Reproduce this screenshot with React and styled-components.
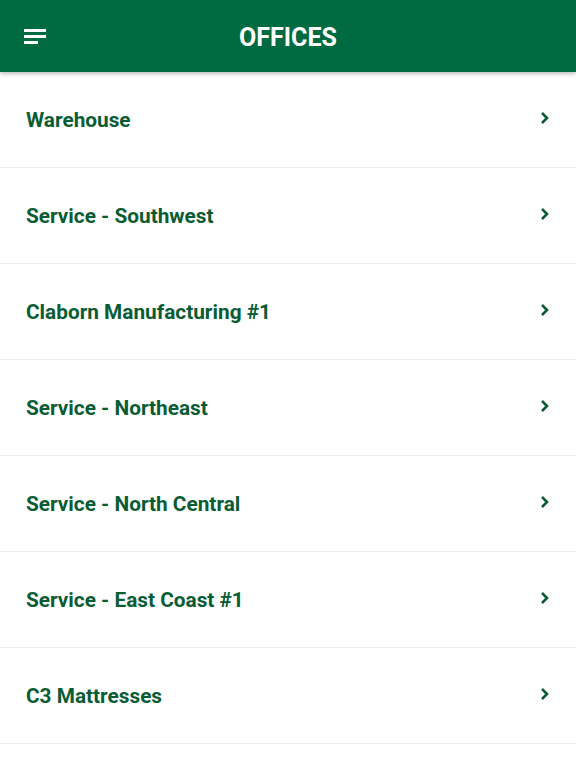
import React from "react";
import styled, { createGlobalStyle } from "styled-components";

const offices = [
  "Warehouse",
  "Service - Southwest",
  "Claborn Manufacturing #1",
  "Service - Northeast",
  "Service - North Central",
  "Service - East Coast #1",
  "C3 Mattresses",
];

const GlobalStyle = createGlobalStyle`
  body {
    margin: 0;
    background: #ffffff;
    font-family: Roboto, "Liberation Sans", sans-serif;
  }
`;

const Page = styled.div`
  width: 576px;
  min-height: 768px;
  background: #fff;
`;

const Header = styled.header`
  position: relative;
  z-index: 1;
  height: 72px;
  display: flex;
  align-items: center;
  justify-content: center;
  background: #006a40;
  box-shadow: 0 2px 4px rgba(0, 0, 0, 0.25);
`;

const MenuButton = styled.button`
  position: absolute;
  left: 24px;
  top: 29px;
  width: 24px;
  height: 16px;
  padding: 0;
  border: none;
  background: none;
  display: flex;
  flex-direction: column;
  gap: 3.5px;
  span {
    display: block;
    height: 2.5px;
    background: #fff;
    width: 22px;
  }
  span:last-child {
    width: 14px;
  }
`;

const Title = styled.h1`
  margin: 2px 0 0;
  color: #fff;
  font-size: 25px;
  font-weight: 700;
`;

const List = styled.ul`
  margin: 0;
  padding: 0;
  list-style: none;
`;

const Row = styled.li`
  height: 95px;
  border-bottom: 1px solid #ececec;
  display: flex;
  align-items: center;
  justify-content: space-between;
  padding: 0 24px 0 26px;
`;

const Name = styled.span`
  color: #0a5c34;
  font-size: 20.8px;
  font-weight: 700;
  margin-top: 0;
`;

const Chevron = () => (
  <svg width="14" height="14" viewBox="0 0 14 14" style={{ marginTop: -3 }}>
    <path d="M4 2l5 5-5 5" fill="none" stroke="#0a5c34" strokeWidth="2.6" />
  </svg>
);

const App = () => {
  return (
    <Page>
      <GlobalStyle />
      <Header>
        <MenuButton>
          <span />
          <span />
          <span />
        </MenuButton>
        <Title>OFFICES</Title>
      </Header>
      <List>
        {offices.map((o) => (
          <Row key={o}>
            <Name>{o}</Name>
            <Chevron />
          </Row>
        ))}
      </List>
    </Page>
  );
};

export default App;
